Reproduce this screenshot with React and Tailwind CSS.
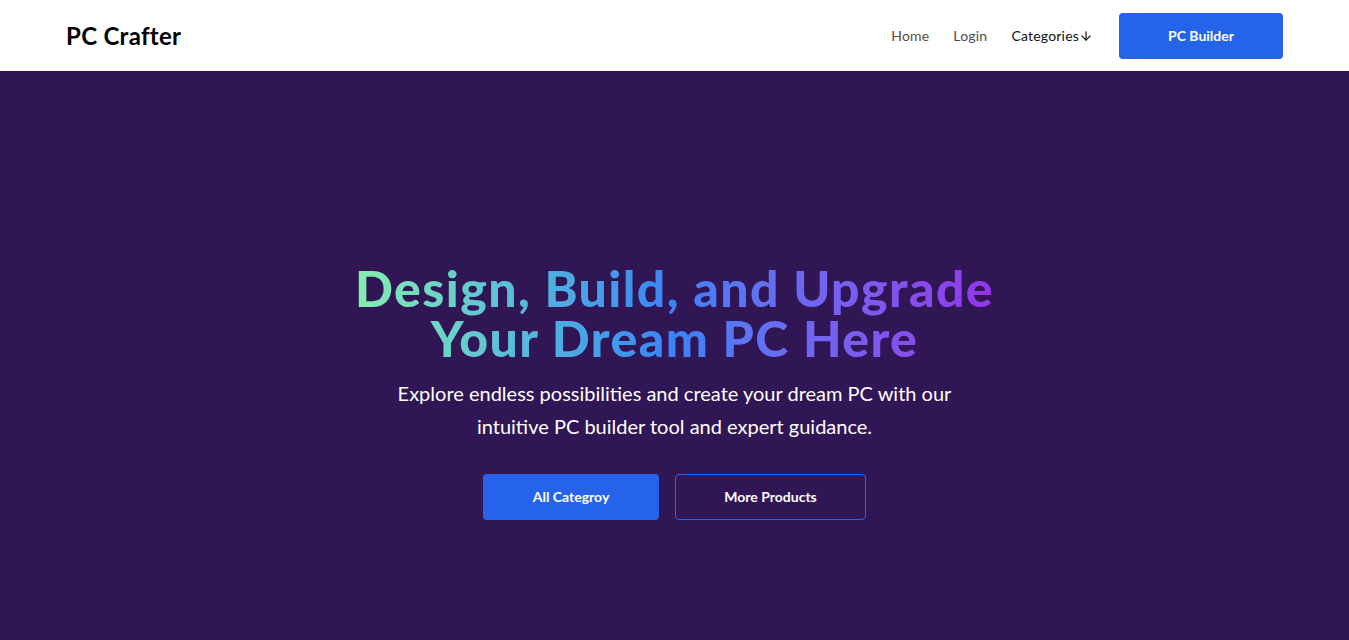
import React from "react";
import { ArrowDown } from "lucide-react";

export default function App() {
  return (
    <div className="min-h-screen bg-[#311656] font-['Lato','Liberation_Sans',sans-serif]">
      {/* Navbar */}
      <header className="bg-white h-[71px] px-[66px] flex items-center justify-between">
        <div className="text-[24px] font-bold text-black tracking-[0.3px]">PC Crafter</div>
        <nav className="flex items-center">
          <a className="text-[14px] text-[#5a4a3a] tracking-[0.2px] mr-6">Home</a>
          <a className="text-[14px] text-[#4b4b5a] tracking-[0.2px] mr-6">Login</a>
          <button className="flex items-center text-[14px] text-[#111] tracking-[0.2px]">
            Categories
            <ArrowDown className="w-3.5 h-3.5" strokeWidth={2} />
          </button>
          <button className="ml-[26px] w-[164px] h-[46px] rounded-[4px] bg-[#2563eb] text-white text-[14px] font-bold">
            PC Builder
          </button>
        </nav>
      </header>

      {/* Hero */}
      <section className="h-[640px] flex flex-col items-center justify-center text-center">
        <h1 className="text-[50px] leading-[50px] tracking-[1.4px] font-black bg-gradient-to-r from-[#86efac] via-[#3b82f6] to-[#9333ea] bg-clip-text text-transparent">
          Design, Build, and Upgrade
          <br />
          Your Dream PC Here
        </h1>
        <p className="mt-[14px] max-w-[580px] text-[20px] leading-[33px] text-white">
          Explore endless possibilities and create your dream PC with our intuitive PC builder tool and expert guidance.
        </p>
        <div className="mt-[31px] flex gap-4">
          <button className="w-[176px] h-[46px] rounded-[4px] bg-[#2563eb] text-white text-[14px] font-bold">
            All Categroy
          </button>
          <button className="w-[191px] h-[46px] rounded-[4px] border border-[#2563eb] text-white text-[14px] font-bold">
            More Products
          </button>
        </div>
      </section>
    </div>
  );
}
